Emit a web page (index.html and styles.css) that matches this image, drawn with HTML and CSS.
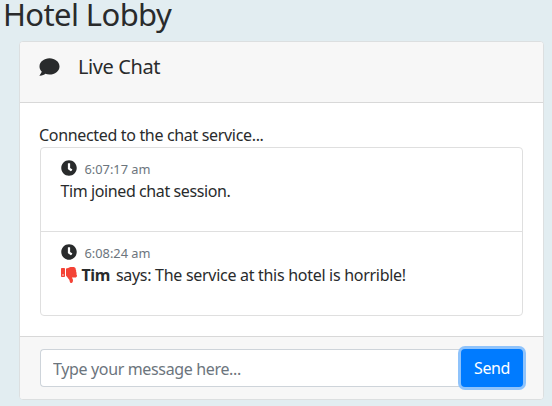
FILE: index.html
```html
<!DOCTYPE html>
<html lang="en">
<head>
<meta charset="utf-8">
<title>Hotel Lobby</title>
<link rel="stylesheet" href="styles.css">
</head>
<body>
<svg class="sprite" aria-hidden="true">
<symbol id="comment" viewBox="0 0 512 512"><path d="M256 32C114.6 32 0 125.1 0 240c0 49.6 21.4 95 57 130.7C44.5 421.1 2.7 466 2.2 466.5c-2.2 2.3-2.8 5.7-1.5 8.7S4.8 480 8 480c66.3 0 116-31.8 140.6-51.4 32.7 12.3 69 19.4 107.4 19.4 141.4 0 256-93.1 256-208S397.4 32 256 32z"/></symbol>
<symbol id="clock" viewBox="0 0 512 512"><path d="M256 8C119 8 8 119 8 256s111 248 248 248 248-111 248-248S393 8 256 8zm57.1 350.1L224.9 294c-3.1-2.3-4.9-5.9-4.9-9.7V116c0-6.6 5.4-12 12-12h48c6.6 0 12 5.4 12 12v137.7l63.5 46.2c5.4 3.9 6.5 11.4 2.6 16.8l-28.2 38.8c-3.9 5.3-11.4 6.5-16.8 2.6z"/></symbol>
<symbol id="thumbs-down" viewBox="0 0 512 512"><path d="M0 56v240c0 13.255 10.745 24 24 24h80c13.255 0 24-10.745 24-24V56c0-13.255-10.745-24-24-24H24C10.745 32 0 42.745 0 56zm40 200c0-13.255 10.745-24 24-24s24 10.745 24 24-10.745 24-24 24-24-10.745-24-24zm272 256c-20.183 0-29.485-39.293-33.931-57.795-5.206-21.666-10.589-44.07-25.393-58.902-32.469-32.524-49.503-73.967-89.117-113.111a11.98 11.98 0 0 1-3.558-8.521V59.901c0-6.541 5.243-11.878 11.783-11.998 15.831-.29 36.694-9.079 52.651-16.178C256.189 17.598 295.709.017 343.995 0h2.844c42.777 0 93.363.413 113.774 29.737 8.392 12.057 10.446 27.034 6.148 44.632 16.312 17.053 25.063 48.863 16.382 74.757 17.544 23.432 19.143 56.132 9.308 79.469l.11.11c11.893 11.949 19.523 31.259 19.439 49.197-.156 30.352-26.157 58.096-59.553 58.096H350.723C358.03 364.34 384 388.132 384 430.548 384 504 336 512 312 512z"/></symbol>
</svg>
<h1 class="title">Hotel Lobby</h1>
<main class="card">
  <header class="card-header">
    <svg class="icon icon-lg"><use href="#comment"/></svg>
    <h2 class="heading">Live Chat</h2>
  </header>
  <section class="card-body">
    <div class="status">Connected to the chat service...</div>
    <ul class="messages">
      <li class="message">
        <div class="meta"><svg class="icon"><use href="#clock"/></svg><small class="time">6:07:17 am</small></div>
        <div class="text">Tim joined chat session.</div>
      </li>
      <li class="message">
        <div class="meta"><svg class="icon"><use href="#clock"/></svg><small class="time">6:08:24 am</small></div>
        <div class="text"><svg class="icon negative"><use href="#thumbs-down"/></svg><b class="author">Tim</b><span class="said">says: The service at this hotel is horrible!</span></div>
      </li>
    </ul>
  </section>
  <footer class="card-footer">
    <input class="field" type="text" placeholder="Type your message here...">
    <button class="send" type="button">Send</button>
  </footer>
</main>
</body>
</html>
```
FILE: styles.css
```css
* { box-sizing: border-box; }
body {
  margin: 0;
  height: 406px;
  overflow: hidden;
  background: #e2edf1;
  color: #292b2c;
  font: 16px/24px "Noto Sans", sans-serif;
}
.sprite { display: none; }
.title {
  margin: 0;
  padding: 0 0 0 3px;
  height: 41px;
  font-size: 31px;
  font-weight: 400;
  line-height: 29px;
  letter-spacing: -0.6px;
}
.card {
  margin-left: 19px;
  width: 525px;
  height: 359px;
  display: flex;
  flex-direction: column;
  background: #fff;
  border: 1px solid #dcdfe0;
  border-radius: 4px;
  overflow: hidden;
}
.card-header {
  height: 61px;
  display: flex;
  align-items: flex-start;
  gap: 18px;
  padding: 12px 19px;
  background: #f7f7f7;
  border-bottom: 1px solid #d8d8d8;
}
.heading {
  margin: 0;
  font-size: 20px;
  font-weight: 400;
  line-height: 26px;
  letter-spacing: -0.4px;
}
.icon {
  flex: none;
  width: 16px;
  height: 16px;
  fill: currentColor;
}
.icon-lg {
  width: 21px;
  height: 20px;
  margin-top: 3px;
}
.card-body {
  flex: 1;
  padding: 20px;
}
.status {
  margin-left: -1px;
  white-space: nowrap;
  letter-spacing: -0.33px;
}
.messages {
  margin: 0;
  padding: 0;
  list-style: none;
  height: 169px;
  border: 1px solid #dfdfdf;
  border-radius: 4px;
}
.message {
  height: 83px;
  padding: 9px 19.5px 0;
}
.message + .message { height: 84px; border-top: 1px solid #dfdfdf; }
.meta, .text {
  display: flex;
  align-items: center;
  white-space: nowrap;
}
.meta { height: 22px; }
.text { height: 24px; letter-spacing: -0.4px; }
.time {
  position: relative;
  top: 1px;
  margin-left: 8px;
  color: #6c757d;
  font-size: 12.8px;
}
.negative { color: #f44336; }
.author { margin: 0 6px 0 5px; }
.said { letter-spacing: -0.29px; }
.card-footer {
  height: 63px;
  display: flex;
  padding: 12px 20px;
  background: #f7f7f7;
  border-top: 1px solid #d8d8d8;
}
.field {
  width: 421px;
  height: 38px;
  padding: 2px 12px 0;
  border: 1px solid #ced4da;
  border-right: 0;
  border-radius: 4px 0 0 4px;
  background: #fff;
  font: inherit;
  letter-spacing: -0.35px;
  outline: 0;
}
.field::placeholder { color: #6c757d; opacity: 1; }
.send {
  width: 62px;
  height: 38px;
  padding: 0;
  border: 0;
  border-radius: 4px;
  background: #007bff;
  box-shadow: 0 0 0 3px #8fc3fb;
  color: #fff;
  font: inherit;
  letter-spacing: -0.4px;
}
```
